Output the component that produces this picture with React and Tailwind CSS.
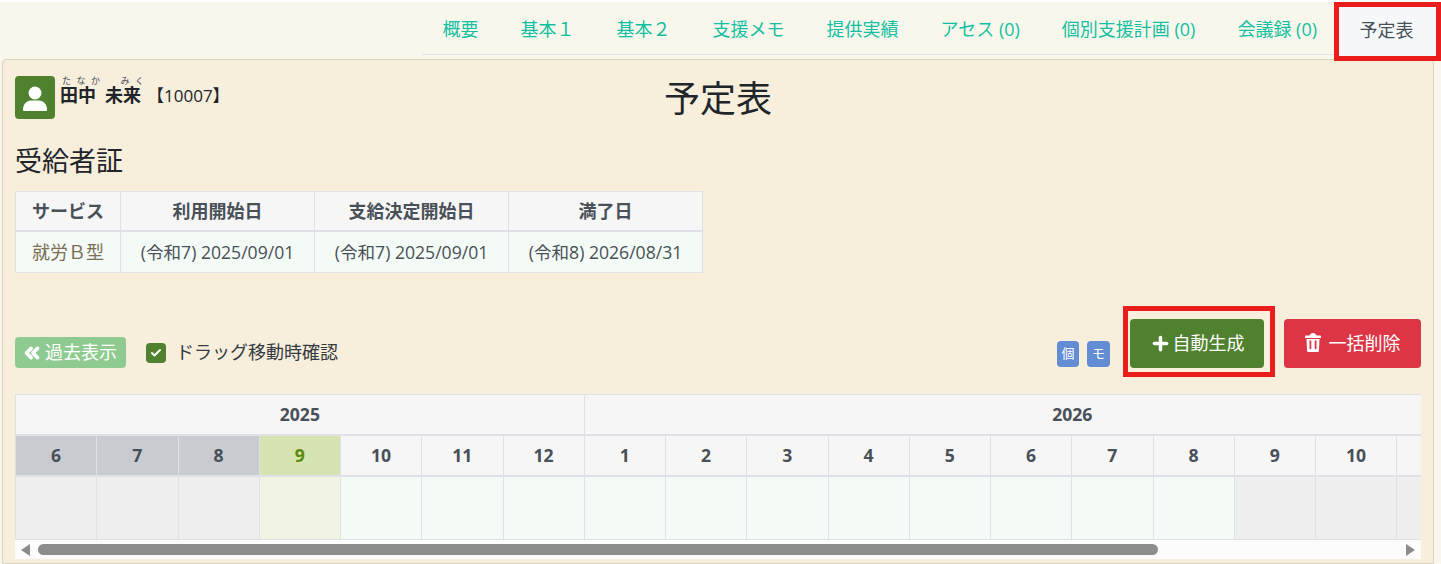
import React from 'react';
import { ChevronsLeft, Check, Plus } from 'lucide-react';

const tabs = ['概要', '基本１', '基本２', '支援メモ', '提供実績', 'アセス (0)', '個別支援計画 (0)', '会議録 (0)'];
const pastMonths = [6, 7, 8];
const months2025 = [10, 11, 12];
const months2026 = [1, 2, 3, 4, 5, 6, 7, 8];
const overMonths = [9, 10];

const Annotated = ({ className, children }) => (
  <div className={`border-[5px] border-[#ea1c1c] ${className}`}>{children}</div>
);

const MonthCell = ({ label, className = 'bg-[#f6f6f6] text-[#495057]' }) => (
  <div className={`w-[81.25px] shrink-0 h-full flex items-center justify-center text-[17.6px] font-bold border-r border-[#dee2e6] ${className}`}>
    {label}
  </div>
);

const BodyCell = ({ className = 'bg-[#f4faf6]' }) => (
  <div className={`w-[81.25px] shrink-0 h-full border-r border-[#dee2e6] ${className}`} />
);

const DateCell = ({ era, date }) => (
  <div className="w-[194px] h-full flex items-center justify-center border-r border-[#dee2e6] text-[17.6px]">
    ({era}) {date}
  </div>
);

export default function App() {
  return (
    <div className="w-[1441px] h-[564px] overflow-hidden bg-white pt-[2px] text-[#212529] text-[18px] font-['Open_Sans','Noto_Sans_CJK_JP',sans-serif]">
      <div className="h-[562px] bg-[#f9f7eb] flex flex-col">
        {/* Tabs */}
        <div className="h-[57px] flex justify-end shrink-0">
          <div className="flex h-[53px] border-b border-[#dee2e6] items-stretch">
            {tabs.map((tab) => (
              <div key={tab} className="px-[21px] pt-[3px] flex items-center text-[#12bfa2] whitespace-nowrap">
                {tab}
              </div>
            ))}
            <Annotated className="w-[107px] h-[59px] -ml-[4px] -mb-[7px] pb-[3px] pr-[2px] flex items-center justify-center bg-[#f5f7fa] text-[#495057] relative z-10">
              予定表
            </Annotated>
          </div>
        </div>

        {/* Card */}
        <div className="ml-[2px] mr-[7px] flex-1 bg-[#f7eedc] border border-[#d9d2c0] rounded-t-[4px] px-[12px] flex flex-col min-h-0">
          <div className="relative h-[70px] shrink-0">
            <div className="flex pt-[16px]">
              <div className="w-[40px] h-[43px] rounded-[4px] bg-[#50812f] flex items-center justify-center">
                <svg width="26" height="28" viewBox="0 0 26 28" fill="white">
                  <circle cx="13" cy="9" r="6.5" />
                  <path d="M2 27c-.8 0-1-.6-1-1.500C1 20.500 4.500 16.500 9 16.500h8c4.500 0 8 4 8 9 0 .9-.2 1.500-1 1.500z" />
                </svg>
              </div>
              <div className="ml-[5px] whitespace-nowrap -mt-[1px]">
                <div className="text-[9px] leading-[11px] h-[11px] text-[#495057] tracking-[5.5px] pl-[2px]">
                  たなか<span className="ml-[15px]">みく</span>
                </div>
                <div className="leading-[18px]">
                  <span className="font-bold">田中</span>
                  <span className="font-bold ml-[9px]">未来</span>
                  <span className="ml-[6px] text-[17px]">【10007】</span>
                </div>
              </div>
            </div>
            <div className="absolute left-0 right-0 top-[15px] text-center text-[36px] leading-[48px]">予定表</div>
          </div>

          <div className="mt-[15px] text-[27px] leading-[32px] shrink-0">受給者証</div>

          {/* Certificate table */}
          <div className="mt-[14px] w-[688px] h-[82px] border border-[#dee2e6] border-r-0 shrink-0">
            <div className="flex h-[40px] bg-[#f6f6f6] border-b-2 border-[#dee2e6] font-bold text-[#495057]">
              <div className="w-[105px] flex items-center justify-center border-r border-[#dee2e6]">サービス</div>
              <div className="w-[194px] flex items-center justify-center border-r border-[#dee2e6]">利用開始日</div>
              <div className="w-[194px] flex items-center justify-center border-r border-[#dee2e6]">支給決定開始日</div>
              <div className="w-[194px] flex items-center justify-center border-r border-[#dee2e6]">満了日</div>
            </div>
            <div className="flex h-[40px] bg-[#f4faf6] text-[#495057]">
              <div className="w-[105px] flex items-center justify-center border-r border-[#dee2e6] text-[#7b6f55]">就労Ｂ型</div>
              <DateCell era="令和7" date="2025/09/01" />
              <DateCell era="令和7" date="2025/09/01" />
              <DateCell era="令和8" date="2026/08/31" />
            </div>
          </div>

          {/* Toolbar */}
          <div className="mt-[33px] h-[88px] flex items-start shrink-0">
            <div className="mt-[31px] h-[31px] w-[111px] pr-[3px] rounded-[4px] bg-[#8fcb91] text-white flex items-center justify-center gap-[2px] whitespace-nowrap">
              <ChevronsLeft size={22} strokeWidth={4} />
              過去表示
            </div>
            <div className="mt-[31px] ml-[20px] h-[31px] flex items-center">
              <div className="w-[20px] h-[20px] rounded-[4px] bg-[#50812f] flex items-center justify-center">
                <Check size={12} strokeWidth={4} className="text-white" />
              </div>
              <span className="ml-[10px] text-[#343a40]">ドラッグ移動時確認</span>
            </div>
            <div className="ml-auto mt-[35px] flex items-center">
              <div className="w-[22px] h-[26px] rounded-[4px] bg-[#628cd3] text-white text-[13px] flex items-center justify-center">個</div>
              <div className="ml-[8px] w-[23px] h-[26px] rounded-[4px] bg-[#628cd3] text-white text-[13px] flex items-center justify-center">モ</div>
            </div>
            <Annotated className="ml-[13px] w-[152px] h-[71px] pt-[8px] pb-[4px] pl-[2px] pr-[6px] shrink-0">
              <div className="w-full h-full rounded-[4px] bg-[#50812f] text-white flex items-center justify-center gap-[2px] whitespace-nowrap">
                <Plus size={21} strokeWidth={4} />
                自動生成
              </div>
            </Annotated>
            <div className="ml-[9px] mt-[13px] w-[137px] h-[49px] rounded-[4px] bg-[#dc3545] text-white flex items-center justify-center gap-[8px] whitespace-nowrap">
              <svg className="-mt-[2px]" width="16" height="19" viewBox="0 0 16 19" fill="white">
                <path d="M4.500 2.500C5 1 6.500 0 8 0s3 1 3.500 2.500H15c.6 0 1 .5 1 1.200V5H0V3.700c0-.7.4-1.200 1-1.200zM1.500 6h13l-.5 11.500c0 .8-.7 1.500-1.500 1.500h-9c-.8 0-1.500-.7-1.500-1.500zM4.500 7.500V16h1.800V7.500zm5.200 0V16h1.800V7.500z" />
              </svg>
              一括削除
            </div>
          </div>

          {/* Timeline */}
          <div className="w-[1406px] shrink-0 overflow-hidden">
            <div className="flex h-[42px] bg-[#f6f6f6] border-t border-l border-[#dee2e6] border-b-2 font-bold text-[17.6px] text-[#495057]">
              <div className="w-[568.75px] shrink-0 flex items-center justify-center border-r border-[#dee2e6]">2025</div>
              <div className="w-[975px] shrink-0 flex items-center justify-center">2026</div>
            </div>
            <div className="flex h-[41px] border-l border-b-2 border-[#dee2e6]">
              {pastMonths.map((m) => (
                <MonthCell key={m} label={m} className="bg-[#c8ccd0] text-[#495057]" />
              ))}
              <MonthCell label={9} className="bg-[#d5e4b0] text-[#5a8a0c]" />
              {months2025.map((m) => <MonthCell key={m} label={m} />)}
              {months2026.map((m) => <MonthCell key={`n${m}`} label={m} />)}
              {overMonths.map((m) => <MonthCell key={`o${m}`} label={m} />)}
              <MonthCell label="" />
            </div>
            <div className="flex h-[63px] border-l border-b border-[#dee2e6]">
              {pastMonths.map((m) => <BodyCell key={m} className="bg-[#eeeeee]" />)}
              <BodyCell className="bg-[#f1f4e4]" />
              {months2025.map((m) => <BodyCell key={m} />)}
              {months2026.map((m) => <BodyCell key={`n${m}`} />)}
              {overMonths.map((m) => <BodyCell key={`o${m}`} className="bg-[#eeeeee]" />)}
              <BodyCell className="bg-[#eeeeee]" />
            </div>
            {/* Scrollbar */}
            <div className="h-[19px] bg-[#fcfcfc] flex items-center pl-[6px] pr-[6px]">
              <svg width="9" height="12" viewBox="0 0 9 12" fill="#8c8c8c"><path d="M9 0v12L0 6z" /></svg>
              <div className="ml-[8px] w-[1120px] h-[11px] rounded-full bg-[#8c8c8c]" />
              <svg className="ml-auto" width="9" height="12" viewBox="0 0 9 12" fill="#8c8c8c"><path d="M0 0v12l9-6z" /></svg>
            </div>
          </div>
        </div>
      </div>
    </div>
  );
}
